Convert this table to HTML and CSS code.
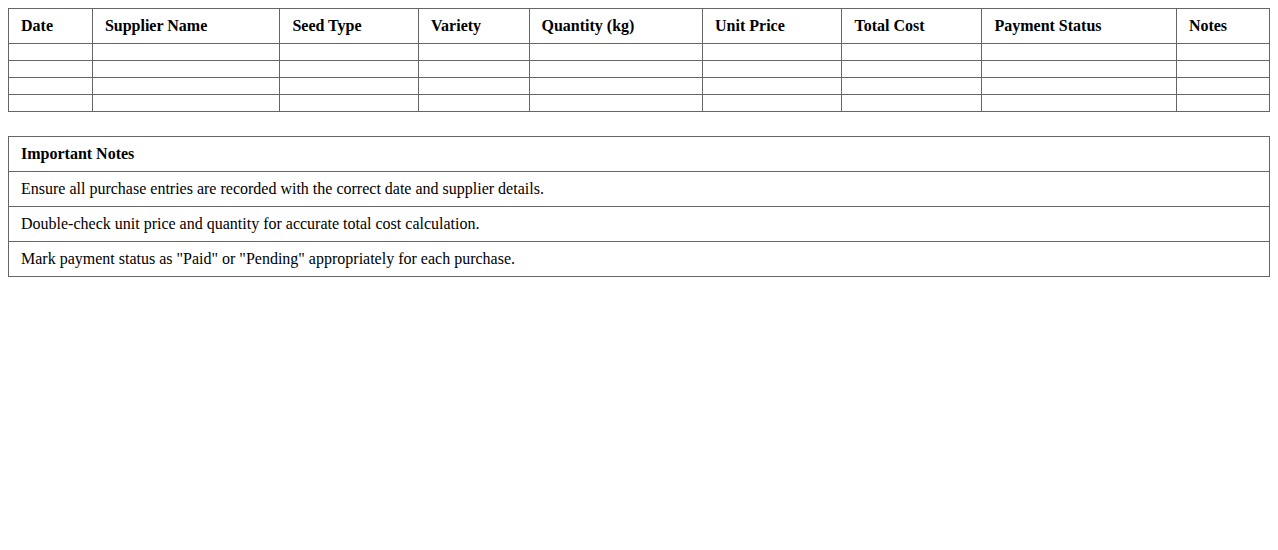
FILE: index.html
```html
<!DOCTYPE html>
<html>
<head>
<meta charset="utf-8">
<title>Seed Purchase Log</title>
<link rel="stylesheet" href="styles.css">
</head>
<body>
<table class="log">
  <thead>
    <tr>
      <th>Date</th>
      <th>Supplier Name</th>
      <th>Seed Type</th>
      <th>Variety</th>
      <th>Quantity (kg)</th>
      <th>Unit Price</th>
      <th>Total Cost</th>
      <th>Payment Status</th>
      <th>Notes</th>
    </tr>
  </thead>
  <tbody>
    <tr><td></td><td></td><td></td><td></td><td></td><td></td><td></td><td></td><td></td></tr>
    <tr><td></td><td></td><td></td><td></td><td></td><td></td><td></td><td></td><td></td></tr>
    <tr><td></td><td></td><td></td><td></td><td></td><td></td><td></td><td></td><td></td></tr>
    <tr><td></td><td></td><td></td><td></td><td></td><td></td><td></td><td></td><td></td></tr>
  </tbody>
</table>
<table class="notes">
  <thead>
    <tr><th>Important Notes</th></tr>
  </thead>
  <tbody>
    <tr><td>Ensure all purchase entries are recorded with the correct date and supplier details.</td></tr>
    <tr><td>Double-check unit price and quantity for accurate total cost calculation.</td></tr>
    <tr><td>Mark payment status as "Paid" or "Pending" appropriately for each purchase.</td></tr>
  </tbody>
</table>
</body>
</html>
```
FILE: styles.css
```css
body {
  margin: 8px;
  font-family: "Liberation Serif", "Times New Roman", serif;
  font-size: 16px;
  color: #000;
  background: #fff;
}
table {
  width: 100%;
  border-collapse: collapse;
}
th, td {
  border: 1px solid #666;
  padding: 8px 12px;
  text-align: left;
}
th {
  font-weight: bold;
}
.log {
  margin-bottom: 24px;
}
```
